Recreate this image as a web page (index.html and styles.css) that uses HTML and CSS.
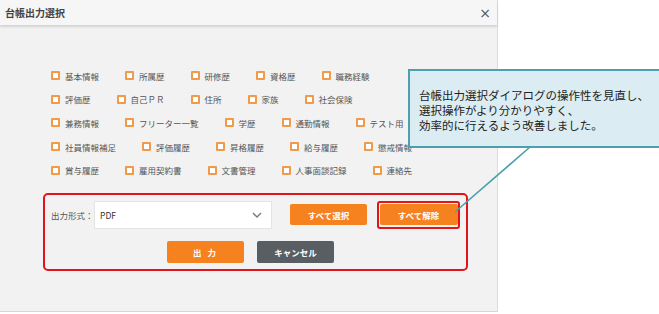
FILE: index.html
```html
<!DOCTYPE html>
<html lang="ja">
<head>
    <meta charset="UTF-8">
    <meta name="viewport" content="width=device-width, initial-scale=1.0">
    <title>台帳出力選択</title>
    <link rel="stylesheet" href="styles.css">
</head>
<body>

<div class="dialog">
    <div class="dialog-header">
        <span class="dialog-title">台帳出力選択</span>
        <span class="close-btn">×</span>
    </div>

    <div class="dialog-body">
        <div class="check-list">
            <div class="check-row">
                <label class="check"><span class="box"></span>基本情報</label>
                <label class="check"><span class="box"></span>所属歴</label>
                <label class="check"><span class="box"></span>研修歴</label>
                <label class="check"><span class="box"></span>資格歴</label>
                <label class="check"><span class="box"></span>職務経験</label>
            </div>
            <div class="check-row">
                <label class="check"><span class="box"></span>評価歴</label>
                <label class="check"><span class="box"></span>自己ＰＲ</label>
                <label class="check"><span class="box"></span>住所</label>
                <label class="check"><span class="box"></span>家族</label>
                <label class="check"><span class="box"></span>社会保険</label>
            </div>
            <div class="check-row">
                <label class="check"><span class="box"></span>兼務情報</label>
                <label class="check"><span class="box"></span>フリーター一覧</label>
                <label class="check"><span class="box"></span>学歴</label>
                <label class="check"><span class="box"></span>通勤情報</label>
                <label class="check"><span class="box"></span>テスト用</label>
            </div>
            <div class="check-row">
                <label class="check"><span class="box"></span>社員情報補足</label>
                <label class="check"><span class="box"></span>評価履歴</label>
                <label class="check"><span class="box"></span>昇格履歴</label>
                <label class="check"><span class="box"></span>給与履歴</label>
                <label class="check"><span class="box"></span>懲戒情報</label>
            </div>
            <div class="check-row">
                <label class="check"><span class="box"></span>賞与履歴</label>
                <label class="check"><span class="box"></span>雇用契約書</label>
                <label class="check"><span class="box"></span>文書管理</label>
                <label class="check"><span class="box"></span>人事面談記録</label>
                <label class="check"><span class="box"></span>連絡先</label>
            </div>
        </div>

        <div class="output-panel">
            <div class="format-row">
                <span class="format-label">出力形式：</span>
                <div class="select">
                    <span>PDF</span>
                    <svg class="chevron" width="10" height="6" viewBox="0 0 10 6">
                        <path d="M1 1 L5 5 L9 1" fill="none" stroke="#777" stroke-width="1.4"/>
                    </svg>
                </div>
                <button class="btn btn-orange btn-select">すべて選択</button>
                <div class="highlight">
                    <button class="btn btn-orange btn-clear">すべて解除</button>
                </div>
            </div>
            <div class="action-row">
                <button class="btn btn-orange btn-output">出 力</button>
                <button class="btn btn-gray btn-cancel">キャンセル</button>
            </div>
        </div>
    </div>
</div>

<!-- 吹き出し -->
<svg class="pointer" width="659" height="314">
    <line x1="530" y1="147" x2="455" y2="212" stroke="#4c9fae" stroke-width="1.6"/>
</svg>
<div class="callout">
    台帳出力選択ダイアログの操作性を見直し、<br>
    選択操作がより分かりやすく、<br>
    効率的に行えるよう改善しました。
</div>

</body>
</html>
```

FILE: styles.css
```css
body {
    margin: 0;
    padding: 0;
    background-color: #ffffff;
    font-family: "Noto Sans CJK JP", "Noto Sans", sans-serif;
    position: relative;
    width: 659px;
    height: 314px;
    overflow: hidden;
}
.dialog {
    width: 498px;
    height: 312px;
    background-color: #f2f2f2;
    border-right: 1px solid #dcdcdc;
    border-bottom: 1px solid #d6d6d6;
    box-sizing: border-box;
}
.dialog-header {
    height: 25px;
    background-color: #f6f6f6;
    box-shadow: 0 2px 2px rgba(0, 0, 0, 0.13);
    display: flex;
    align-items: center;
    justify-content: space-between;
    padding: 0 5px;
    position: relative;
}
.dialog-title {
    font-size: 10px;
    font-weight: bold;
    color: #444;
}
.close-btn {
    font-family: "DejaVu Sans", sans-serif;
    font-size: 14px;
    color: #555;
    margin-right: 1px;
}
.dialog-body {
    padding: 39px 0 0 43px;
}
.check-list {
    padding-left: 8px;
}
.check-row {
    display: flex;
    gap: 26px;
    height: 23.6px;
    align-items: center;
}
.check {
    display: flex;
    align-items: center;
    font-size: 8.5px;
    color: #555;
}
.box {
    width: 9px;
    height: 9px;
    box-sizing: border-box;
    border: 2px solid #f09a4c;
    border-radius: 1px;
    background-color: #fff;
    margin-right: 5px;
}
.output-panel {
    margin-top: 11px;
    width: 425px;
    height: 78px;
    border: 2px solid #e0141a;
    border-radius: 5px;
    box-sizing: border-box;
    padding: 6px 6px 0 6px;
}
.format-row {
    display: flex;
    align-items: center;
    height: 28px;
}
.format-label {
    font-size: 8.5px;
    color: #555;
    width: 43px;
}
.select {
    width: 178px;
    height: 28px;
    background-color: #fff;
    border: 1px solid #e4e4e4;
    box-sizing: border-box;
    display: flex;
    align-items: center;
    justify-content: space-between;
    padding: 0 9px 0 5px;
    font-size: 8.5px;
    color: #333;
}
.btn {
    border: none;
    border-radius: 2px;
    color: #fff;
    font-family: inherit;
    font-size: 8.5px;
    font-weight: bold;
    padding: 0;
    height: 21px;
}
.btn-orange {
    background-color: #f5821f;
}
.btn-gray {
    background-color: #595e63;
}
.btn-select {
    width: 77px;
    margin-left: 18px;
}
.highlight {
    margin-left: 10px;
    border: 2px solid #e0141a;
    border-radius: 3px;
    padding: 0;
    height: 28px;
    box-sizing: border-box;
    display: flex;
    align-items: center;
    justify-content: center;
    width: 83px;
}
.btn-clear {
    width: 78px;
    height: 21px;
}
.action-row {
    display: flex;
    gap: 13px;
    margin-top: 12px;
    padding-left: 116px;
}
.action-row .btn {
    width: 77px;
    height: 22px;
}
.btn-output {
    letter-spacing: 2px;
}
.pointer {
    position: absolute;
    left: 0;
    top: 0;
}
.callout {
    position: absolute;
    left: 408px;
    top: 69px;
    width: 251px;
    height: 79px;
    box-sizing: border-box;
    border: 2px solid #4c9fae;
    border-right: none;
    background-color: #dbecf2;
    padding: 17px 0 0 9px;
    font-size: 11.5px;
    line-height: 15px;
    color: #222;
}
```
